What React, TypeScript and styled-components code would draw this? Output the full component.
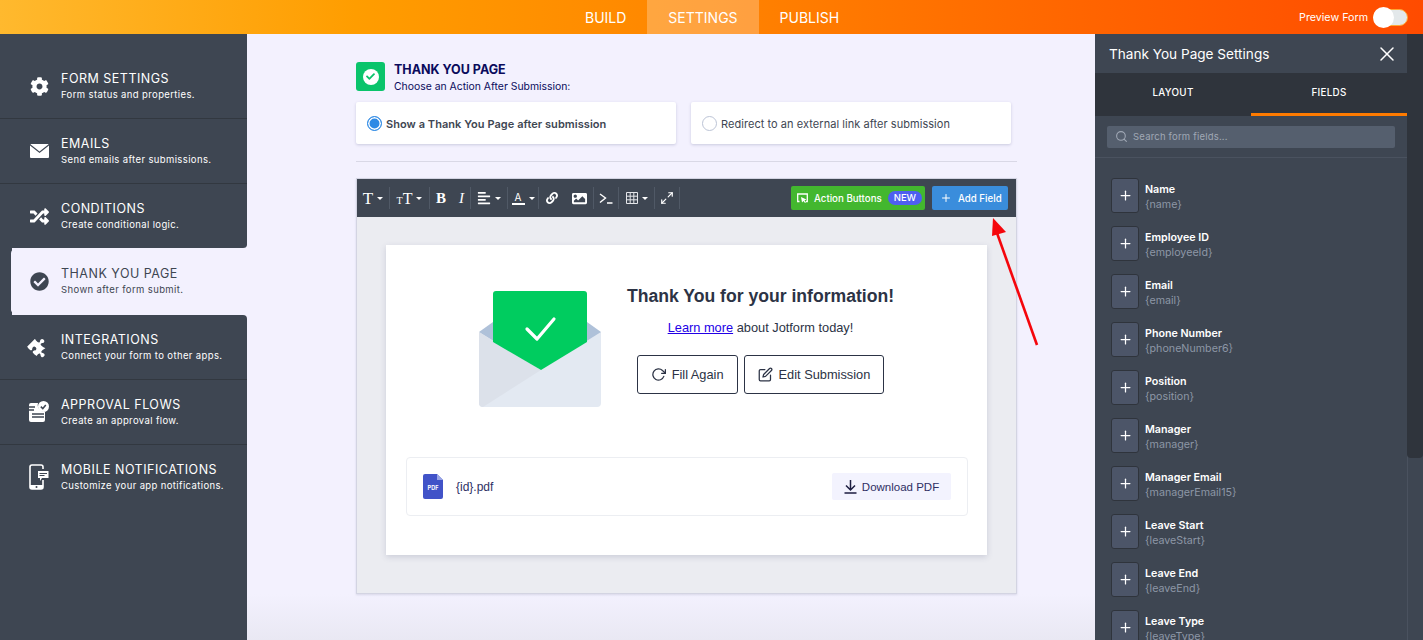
import React from 'react'
import styled, { createGlobalStyle } from 'styled-components'
import {
  FaCog,
  FaRandom,
  FaCheckCircle,
  FaPuzzlePiece,
  FaAlignLeft,
  FaLink,
  FaImage,
  FaCheck,
} from 'react-icons/fa'
import { FiRotateCw, FiEdit, FiSearch, FiX, FiMaximize2, FiPlus } from 'react-icons/fi'

const dark = '#3e4652'
const darker = '#2f343c'
const pageBg = '#f3f1fe'

const GlobalStyle = createGlobalStyle`
  html, body {
    margin: 0;
    height: 100%;
    overflow: hidden;
    font-family: Inter, "Noto Sans", sans-serif;
  }
  * { box-sizing: border-box; }
`

const Page = styled.div`
  position: relative;
  width: 1423px;
  height: 640px;
  display: flex;
  flex-direction: column;
  overflow: hidden;
`

const Header = styled.header`
  height: 34px;
  flex: none;
  display: flex;
  align-items: stretch;
  padding-left: 564px;
  padding-right: 15px;
  background: linear-gradient(90deg, #ffb92e 0%, #ff9d00 25%, #ff8400 50%, #ff6600 75%, #ff4b00 100%);
`

const NavTab = styled.a<{ $active?: boolean }>`
  display: flex;
  align-items: center;
  padding: 0 21px;
  font-size: 14px;
  color: #fff;
  background: ${({ $active }) => ($active ? 'rgba(255, 255, 255, 0.25)' : 'transparent')};
`

const Preview = styled.div`
  margin-left: auto;
  display: flex;
  align-items: center;
  gap: 5px;
  color: #fff;
  font-size: 10.7px;
`

const Switch = styled.div`
  width: 35px;
  height: 17px;
  border-radius: 9px;
  background: #e3e8ea;
  border: 1px solid #ffa733;
  display: flex;
  align-items: center;

  &::before {
    content: '';
    width: 21px;
    height: 21px;
    margin-left: -1px;
    border-radius: 50%;
    background: #fff;
  }
`

const Body = styled.div`
  flex: 1;
  display: flex;
  min-height: 0;
`

const Sidebar = styled.nav`
  width: 247px;
  flex: none;
  display: flex;
  flex-direction: column;
  background: linear-gradient(90deg, ${dark} 0 12px, ${pageBg} 12px);
`

const SideFill = styled.div`
  flex: 1;
  background: ${dark};
`

const SideItem = styled.div<{ $active?: boolean; $before?: boolean; $after?: boolean; $first?: boolean; $last?: boolean }>`
  height: ${({ $first, $active }) => ($first ? 85 : $active ? 65 : 65)}px;
  flex: none;
  display: flex;
  align-items: center;
  gap: 12px;
  padding-top: ${({ $first }) => ($first ? 20 : 0)}px;
  padding-left: ${({ $active }) => ($active ? 18 : 29)}px;
  margin-left: ${({ $active }) => ($active ? 11 : 0)}px;
  margin-bottom: ${({ $active }) => ($active ? 1 : 0)}px;
  background: ${({ $active }) => ($active ? pageBg : dark)};
  color: ${({ $active }) => ($active ? dark : '#fff')};
  border-bottom: 1px solid ${({ $active, $before, $last }) => ($active || $before || $last ? 'transparent' : '#323840')};
  border-radius: ${({ $active, $before, $after }) =>
    $active ? '4px 0 0 4px' : $before ? '0 0 4px 0' : $after ? '0 4px 0 0' : '0'};
  background-clip: ${({ $last }) => ($last ? 'border-box' : 'padding-box')};
`

const SideIcon = styled.span<{ $turn?: number }>`
  width: 20px;
  height: 22px;
  flex: none;
  display: flex;
  align-items: center;
  justify-content: center;
  font-size: 19px;

  svg {
    transform: rotate(${({ $turn }) => $turn || 0}deg);
  }
`

const SideTitle = styled.div`
  font-size: 12.5px;
  line-height: 16px;
  letter-spacing: 0.5px;
`

const SideText = styled.div`
  font-size: 9.5px;
  line-height: 15px;
  letter-spacing: 0.38px;
`

const Main = styled.main`
  width: 848px;
  flex: none;
  padding: 28px 0 0 109px;
  background: linear-gradient(180deg, ${pageBg} 0, ${pageBg} 560px, #e9e8f3 606px);
`

const Column = styled.div`
  width: 661px;
`

const Intro = styled.div`
  display: flex;
  gap: 9px;
  height: 29px;
`

const IntroBadge = styled.div`
  width: 29px;
  height: 29px;
  border-radius: 3px;
  background: #0ac46b;
  display: flex;
  align-items: center;
  justify-content: center;
`

const IntroDot = styled.div`
  width: 16px;
  height: 16px;
  border-radius: 50%;
  background: #fff;
  color: #0ac46b;
  font-size: 9px;
  display: flex;
  align-items: center;
  justify-content: center;
`

const IntroTitle = styled.div`
  font-size: 12.5px;
  line-height: 15px;
  font-weight: 700;
  color: #0a0b5c;
`

const IntroText = styled.div`
  margin-top: 2px;
  font-size: 10.4px;
  line-height: 15px;
  color: #0a0b5c;
`

const Choices = styled.div`
  display: flex;
  gap: 15px;
  margin-top: 11px;
`

const Choice = styled.div<{ $checked?: boolean }>`
  width: 320px;
  height: 42px;
  padding: 1px 0 0 11px;
  background: #fff;
  border-radius: 2px;
  box-shadow: 0 1px 3px rgba(60, 65, 110, 0.22);
  display: flex;
  align-items: center;
  gap: 4px;
  font-size: 11px;
  letter-spacing: 0.05px;
  font-weight: ${({ $checked }) => ($checked ? 600 : 400)};
  color: #3e4652;
`

const Radio = styled.span<{ $checked?: boolean }>`
  width: 15px;
  height: 15px;
  flex: none;
  border-radius: 50%;
  border: ${({ $checked }) => ($checked ? '1.5px solid #2e8ae5' : '1px solid #bcc4d6')};
  background: ${({ $checked }) => ($checked ? '#2e8ae5' : '#fff')};
  box-shadow: ${({ $checked }) => ($checked ? 'inset 0 0 0 1.5px #fff' : 'none')};
`

const Rule = styled.hr`
  height: 1px;
  margin: 17px 0 16px;
  border: 0;
  background: #d9d8e6;
`

const Editor = styled.section`
  width: 661px;
  height: 416px;
  border: 1px solid #d3d4e2;
  background: #ebecf1;
  box-shadow: 0 1px 2px rgba(60, 65, 110, 0.15);
`

const Toolbar = styled.div`
  height: 38px;
  display: flex;
  align-items: center;
  padding-right: 8px;
  background: ${dark};
  color: #fff;
`

const ToolGroup = styled.div<{ $w: number; $gap?: number }>`
  width: ${({ $w }) => $w}px;
  height: 22px;
  flex: none;
  display: flex;
  align-items: center;
  justify-content: center;
  gap: ${({ $gap }) => $gap || 4}px;
  border-right: 1px solid #505966;
  font-size: 14px;
`

const Glyph = styled.span<{ $size?: number; $weight?: number; $italic?: boolean }>`
  font-family: "Liberation Serif", serif;
  font-size: ${({ $size }) => $size || 16}px;
  font-weight: ${({ $weight }) => $weight || 400};
  font-style: ${({ $italic }) => ($italic ? 'italic' : 'normal')};
  line-height: 1;
`

const Caret = styled.span`
  width: 0;
  height: 0;
  border-left: 3px solid transparent;
  border-right: 3px solid transparent;
  border-top: 3px solid #fff;
`

const ColorA = styled.span`
  font-size: 10px;
  line-height: 11px;
  width: 13px;
  text-align: center;
  border-bottom: 2px solid #fff;
`

const ToolActions = styled.div`
  margin-left: auto;
  display: flex;
  gap: 7px;
`

const ToolButton = styled.div<{ $color: string; $w: number; $inset: number }>`
  width: ${({ $w }) => $w}px;
  height: 24px;
  border-radius: 2px;
  background: ${({ $color }) => $color};
  display: flex;
  align-items: center;
  gap: 6px;
  padding-left: ${({ $inset }) => $inset}px;
  font-size: 9.7px;
  font-weight: 500;
  color: #fff;
`

const NewTag = styled.span`
  height: 14px;
  padding: 0 6px;
  border-radius: 7px;
  background: #4e5ff0;
  line-height: 14px;
  font-size: 9.5px;
`

const EditorBody = styled.div`
  padding: 28px 29px;
`

const Card = styled.div`
  width: 601px;
  height: 310px;
  padding: 46px 19px 0 20px;
  background: #fff;
  box-shadow: 0 2px 6px rgba(60, 65, 110, 0.18);
  font-family: "Liberation Sans", Arial, sans-serif;
  color: #2c3345;
`

const Hero = styled.div`
  height: 166px;
  display: flex;
  gap: 26px;
  padding-left: 73px;
`

const Message = styled.div`
  width: 267px;
  margin-top: -5px;
  display: flex;
  flex-direction: column;
  align-items: center;
`

const MessageTitle = styled.h2`
  margin: 0;
  font-size: 17.6px;
  line-height: 20px;
  font-weight: 700;
  white-space: nowrap;
`

const MessageText = styled.p`
  margin: 14px 0 0;
  font-size: 12.8px;
  line-height: 16px;
  white-space: nowrap;

  a {
    color: #2200e6;
    text-decoration: underline;
  }
`

const Buttons = styled.div`
  display: flex;
  gap: 6px;
  margin-top: 19px;
`

const OutlineButton = styled.div`
  height: 39px;
  padding: 0 13px;
  display: flex;
  align-items: center;
  gap: 6px;
  border: 1px solid #2c3345;
  border-radius: 3px;
  font-size: 12.8px;
  white-space: nowrap;
  background: #fff;

  svg {
    font-size: 15px;
  }
`

const FileBox = styled.div`
  height: 59px;
  display: flex;
  align-items: center;
  padding: 0 16px;
  border: 1px solid #eceef2;
  border-radius: 4px;
`

const FileName = styled.span`
  margin-left: 13px;
  font-size: 12px;
  color: #2e2f64;
`

const Download = styled.div`
  margin-left: auto;
  width: 119px;
  height: 27px;
  display: flex;
  align-items: center;
  justify-content: center;
  gap: 5px;
  border-radius: 2px;
  background: #f3f3fe;
  font-size: 11.5px;
  color: #2e2f64;
`

const Panel = styled.aside`
  width: 328px;
  flex: none;
  display: flex;
  background: ${dark};
`

const PanelInner = styled.div`
  width: 312px;
  flex: none;
  display: flex;
  flex-direction: column;
  overflow: hidden;
`

const PanelHead = styled.div`
  height: 39px;
  flex: none;
  display: flex;
  align-items: center;
  justify-content: space-between;
  padding: 0 8px 0 14px;
  color: #fff;
  font-size: 13.6px;
`

const Tabs = styled.div`
  height: 43px;
  flex: none;
  display: flex;
  background: ${darker};
`

const TabItem = styled.div<{ $active?: boolean }>`
  width: 50%;
  display: flex;
  align-items: center;
  justify-content: center;
  padding-bottom: 2px;
  font-size: 9.8px;
  font-weight: 500;
  letter-spacing: 0.3px;
  color: #fff;
  border-bottom: 3px solid ${({ $active }) => ($active ? '#ff7b00' : 'transparent')};
`

const SearchRow = styled.div`
  height: 42px;
  flex: none;
  padding: 10px 12px 0;
  border-bottom: 1px solid #4a525f;
`

const SearchBox = styled.div`
  height: 22px;
  display: flex;
  align-items: center;
  gap: 5px;
  padding: 0 0 1px 8px;
  border-radius: 2px;
  background: #555f6e;
  color: #a0a8b5;
  font-size: 9.5px;
  letter-spacing: 0.2px;

  svg {
    font-size: 13px;
  }
`

const FieldList = styled.div`
  padding: 20px 16px 0;
  display: flex;
  flex-direction: column;
  gap: 13px;
`

const Field = styled.div`
  display: flex;
  gap: 6px;
  height: 35px;
  flex: none;
`

const AddBox = styled.div`
  width: 28px;
  height: 35px;
  flex: none;
  display: flex;
  align-items: center;
  justify-content: center;
  border: 1px solid ${darker};
  border-radius: 3px;
  background: #4c5568;
  color: #fff;
  font-size: 15px;
`

const FieldLabel = styled.div`
  padding-top: 4px;
  font-size: 10.7px;
  line-height: 15px;
`

const FieldName = styled.div`
  font-weight: 600;
  color: #fff;
`

const FieldKey = styled.div`
  color: #8d97a6;
`

const ScrollTrack = styled.div`
  width: 16px;
  flex: none;
  border-left: 1px solid #4a525f;
`

const ScrollThumb = styled.div`
  height: 424px;
  margin-left: -1px;
  border-radius: 0 0 4px 4px;
  background: ${darker};
`

const ArrowMark = styled.svg`
  position: absolute;
  left: 985px;
  top: 215px;
  width: 60px;
  height: 135px;
`

function MailIcon() {
  return (
    <svg width="19" height="14" viewBox="0 0 19 14">
      <path fill="currentColor" d="M1 0h17a1 1 0 0 1 .6.2L9.500 7.500.4.200A1 1 0 0 1 1 0z" />
      <path fill="currentColor" d="M0 1.400l9.500 7.600L19 1.400V13a1 1 0 0 1-1 1H1a1 1 0 0 1-1-1z" />
    </svg>
  )
}

function ApprovalIcon() {
  return (
    <svg width="20" height="22" viewBox="0 0 20 22">
      <path fill="currentColor" d="M2 2h7a7 7 0 0 0 7 9v8a2 2 0 0 1-2 2H2a2 2 0 0 1-2-2V4a2 2 0 0 1 2-2z" />
      <path stroke="#3e4652" strokeWidth="1.4" d="M0 9h5M3 13h12M3 16h12M0 6h6" />
      <circle cx="14.500" cy="5.500" r="5.500" fill="currentColor" />
      <path d="M11.800 5.600l2 2 3-3.500" fill="none" stroke="#3e4652" strokeWidth="1.500" />
    </svg>
  )
}

function MobileIcon() {
  return (
    <svg width="20" height="26" viewBox="0 0 20 26">
      <rect x="1" y="1" width="13" height="24" rx="2" fill="none" stroke="currentColor" strokeWidth="1.600" />
      <path fill="currentColor" d="M1 21h13v4H1z" />
      <circle cx="7.500" cy="23" r="1" fill="#3e4652" />
      <path fill="#3e4652" d="M7 5h13v11H7z" />
      <path fill="currentColor" d="M9 7h10.500v7H13l-2 3v-3H9z" />
      <path stroke="#3e4652" d="M10.500 9.500h7.500M10.500 11.500h5" />
    </svg>
  )
}

function ActionIcon() {
  return (
    <svg width="11" height="11" viewBox="0 0 11 11" fill="none">
      <path stroke="#fff" strokeWidth="1.300" d="M2.500 8.500H.7V1h9.600v7.500H9" />
      <path fill="#fff" d="M4 4l5.500 2.500-2 .8 1.500 2-1 .7-1.500-2L5 9.500z" />
    </svg>
  )
}

function TerminalIcon() {
  return (
    <svg width="14" height="11" viewBox="0 0 14 11" fill="none" stroke="#fff" strokeWidth="1.400">
      <path d="M1 1l5.500 4L1 9.500M8 10h5.500" />
    </svg>
  )
}

function TableIcon() {
  return (
    <svg width="12" height="12" viewBox="0 0 12 12" fill="none" stroke="#e4e6ea" strokeWidth="1">
      <path d="M.5.5h11v11H.5zM4.200.5v11M7.800.5v11M.5 4.200h11M.5 7.800h11" />
    </svg>
  )
}

function DownloadIcon() {
  return (
    <svg width="13" height="14" viewBox="0 0 13 14" fill="none" stroke="#1c1d40" strokeWidth="1.500">
      <path d="M6.500 0v9.500M2 5.500l4.500 4.500L11 5.500M.5 13h12" />
    </svg>
  )
}

function EnvelopeArt() {
  return (
    <svg width="122" height="116" viewBox="0 0 122 116">
      <path fill="#afc1d9" d="M0 41l14-10h94l14 10v20H0z" />
      <path fill="#e3e9f2" d="M0 41l61 38 61-38v71a4 4 0 0 1-4 4H4a4 4 0 0 1-4-4z" />
      <path fill="#dce1ea" d="M0 41l62 38L4 116a4 4 0 0 1-4-4z" />
      <path fill="#00cc5f" d="M17 0h88a3 3 0 0 1 3 3v48l-46 28-48-28V3a3 3 0 0 1 3-3z" />
      <path fill="none" stroke="#fff" strokeWidth="3.200" strokeLinecap="round" strokeLinejoin="round" d="M48 38l10 10 17-20" />
    </svg>
  )
}

function PdfIcon() {
  return (
    <svg width="20" height="25" viewBox="0 0 20 25">
      <path fill="#4153c8" d="M2 0h12l6 6v17a2 2 0 0 1-2 2H2a2 2 0 0 1-2-2V2a2 2 0 0 1 2-2z" />
      <path fill="#9aa6e6" d="M14 0l6 6h-6z" />
      <text x="10" y="15.500" textAnchor="middle" fontSize="5.500" fontWeight="700" fill="#fff" fontFamily="Inter, sans-serif">
        PDF
      </text>
    </svg>
  )
}

const sideItems = [
  { title: 'FORM SETTINGS', text: 'Form status and properties.', icon: <FaCog /> },
  { title: 'EMAILS', text: 'Send emails after submissions.', icon: <MailIcon /> },
  { title: 'CONDITIONS', text: 'Create conditional logic.', icon: <FaRandom /> },
  { title: 'THANK YOU PAGE', text: 'Shown after form submit.', icon: <FaCheckCircle /> },
  { title: 'INTEGRATIONS', text: 'Connect your form to other apps.', icon: <FaPuzzlePiece />, turn: 45 },
  { title: 'APPROVAL FLOWS', text: 'Create an approval flow.', icon: <ApprovalIcon /> },
  { title: 'MOBILE NOTIFICATIONS', text: 'Customize your app notifications.', icon: <MobileIcon /> },
]

const fields = [
  ['Name', '{name}'],
  ['Employee ID', '{employeeId}'],
  ['Email', '{email}'],
  ['Phone Number', '{phoneNumber6}'],
  ['Position', '{position}'],
  ['Manager', '{manager}'],
  ['Manager Email', '{managerEmail15}'],
  ['Leave Start', '{leaveStart}'],
  ['Leave End', '{leaveEnd}'],
  ['Leave Type', '{leaveType}'],
]

export default function App() {
  return (
    <Page>
      <GlobalStyle />
      <Header>
        <NavTab>BUILD</NavTab>
        <NavTab $active>SETTINGS</NavTab>
        <NavTab>PUBLISH</NavTab>
        <Preview>
          Preview Form
          <Switch />
        </Preview>
      </Header>
      <Body>
        <Sidebar>
          {sideItems.map((item, i) => (
            <SideItem
              key={item.title}
              $first={i === 0}
              $active={i === 3}
              $before={i === 2}
              $after={i === 4}
              $last={i === sideItems.length - 1}
            >
              <SideIcon $turn={item.turn}>{item.icon}</SideIcon>
              <div>
                <SideTitle>{item.title}</SideTitle>
                <SideText>{item.text}</SideText>
              </div>
            </SideItem>
          ))}
          <SideFill />
        </Sidebar>
        <Main>
          <Column>
            <Intro>
              <IntroBadge>
                <IntroDot>
                  <FaCheck />
                </IntroDot>
              </IntroBadge>
              <div>
                <IntroTitle>THANK YOU PAGE</IntroTitle>
                <IntroText>Choose an Action After Submission:</IntroText>
              </div>
            </Intro>
            <Choices>
              <Choice $checked>
                <Radio $checked />
                Show a Thank You Page after submission
              </Choice>
              <Choice>
                <Radio />
                Redirect to an external link after submission
              </Choice>
            </Choices>
            <Rule />
            <Editor>
              <Toolbar>
                <ToolGroup $w={33}>
                  <Glyph $size={17}>T</Glyph>
                  <Caret />
                </ToolGroup>
                <ToolGroup $w={40}>
                  <span>
                    <Glyph $size={10}>T</Glyph>
                    <Glyph $size={16}>T</Glyph>
                  </span>
                  <Caret />
                </ToolGroup>
                <ToolGroup $w={41} $gap={13}>
                  <Glyph $size={15} $weight={700}>B</Glyph>
                  <Glyph $size={15} $italic>I</Glyph>
                </ToolGroup>
                <ToolGroup $w={37}>
                  <FaAlignLeft />
                  <Caret />
                </ToolGroup>
                <ToolGroup $w={31}>
                  <ColorA>A</ColorA>
                  <Caret />
                </ToolGroup>
                <ToolGroup $w={55} $gap={14}>
                  <FaLink size={12} />
                  <FaImage size={15} />
                </ToolGroup>
                <ToolGroup $w={25}>
                  <TerminalIcon />
                </ToolGroup>
                <ToolGroup $w={36}>
                  <TableIcon />
                  <Caret />
                </ToolGroup>
                <ToolGroup $w={25}>
                  <FiMaximize2 size={14} />
                </ToolGroup>
                <ToolActions>
                  <ToolButton $color="#43b72f" $w={134} $inset={6}>
                    <ActionIcon />
                    Action Buttons
                    <NewTag>NEW</NewTag>
                  </ToolButton>
                  <ToolButton $color="#3a8ddc" $w={76} $inset={8}>
                    <FiPlus size={12} />
                    Add Field
                  </ToolButton>
                </ToolActions>
              </Toolbar>
              <EditorBody>
                <Card>
                  <Hero>
                    <EnvelopeArt />
                    <Message>
                      <MessageTitle>Thank You for your information!</MessageTitle>
                      <MessageText>
                        <a href="#learn">Learn more</a> about Jotform today!
                      </MessageText>
                      <Buttons>
                        <OutlineButton>
                          <FiRotateCw />
                          Fill Again
                        </OutlineButton>
                        <OutlineButton>
                          <FiEdit />
                          Edit Submission
                        </OutlineButton>
                      </Buttons>
                    </Message>
                  </Hero>
                  <FileBox>
                    <PdfIcon />
                    <FileName>{'{id}.pdf'}</FileName>
                    <Download>
                      <DownloadIcon />
                      Download PDF
                    </Download>
                  </FileBox>
                </Card>
              </EditorBody>
            </Editor>
          </Column>
        </Main>
        <Panel>
          <PanelInner>
            <PanelHead>
              Thank You Page Settings
              <FiX size={24} strokeWidth={1.5} />
            </PanelHead>
            <Tabs>
              <TabItem>LAYOUT</TabItem>
              <TabItem $active>FIELDS</TabItem>
            </Tabs>
            <SearchRow>
              <SearchBox>
                <FiSearch />
                Search form fields...
              </SearchBox>
            </SearchRow>
            <FieldList>
              {fields.map(([name, key]) => (
                <Field key={key}>
                  <AddBox>
                    <FiPlus />
                  </AddBox>
                  <FieldLabel>
                    <FieldName>{name}</FieldName>
                    <FieldKey>{key}</FieldKey>
                  </FieldLabel>
                </Field>
              ))}
            </FieldList>
          </PanelInner>
          <ScrollTrack>
            <ScrollThumb />
          </ScrollTrack>
        </Panel>
      </Body>
      <ArrowMark viewBox="0 0 60 135">
        <path d="M52 130L12 18" stroke="#f5060c" strokeWidth="2.600" fill="none" />
        <path d="M8 3L21 17L7 21z" fill="#f5060c" />
      </ArrowMark>
    </Page>
  )
}
